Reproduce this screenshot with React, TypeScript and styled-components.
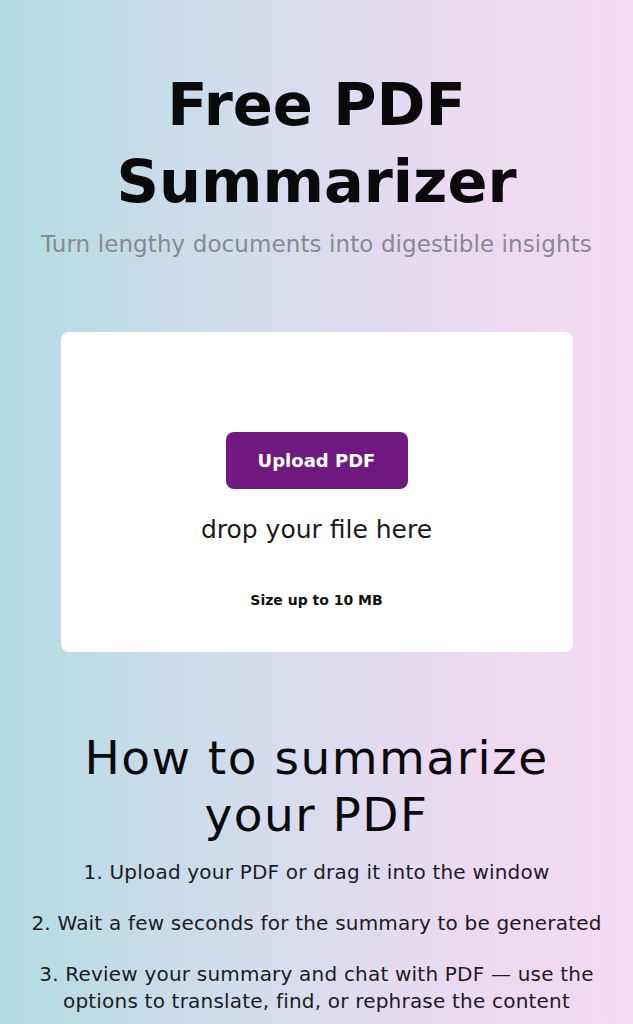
import React from "react";
import styled, { createGlobalStyle } from "styled-components";

const Global = createGlobalStyle`
  html, body { margin: 0; padding: 0; }
  body {
    font-family: "DejaVu Sans", "Noto Sans", sans-serif;
    background: linear-gradient(90deg, #b3dce3 0%, #d8dcef 45%, #ecdaf1 75%, #f6d9f3 100%);
    min-height: 1024px;
    color: #111;
  }
`;

const Page = styled.main`
  display: flex;
  flex-direction: column;
  align-items: center;
  padding: 66px 16px 0;
  box-sizing: border-box;
`;

const Title = styled.h1`
  margin: 0;
  font-size: 59px;
  line-height: 77px;
  font-weight: 700;
  text-align: center;
  color: #0a0a0a;
`;

const Subtitle = styled.p`
  margin: 10px 0 0;
  font-size: 23px;
  line-height: 28px;
  font-weight: 400;
  letter-spacing: 0.1px;
  color: #878a90;
  text-align: center;
`;

const Card = styled.section`
  margin-top: 74px;
  width: 512px;
  height: 320px;
  background: #fff;
  border-radius: 8px;
  display: flex;
  flex-direction: column;
  align-items: center;
  box-sizing: border-box;
  padding-top: 100px;
`;

const UploadButton = styled.button`
  width: 182px;
  height: 57px;
  border: none;
  border-radius: 8px;
  background: #701a80;
  color: #fff;
  font-family: inherit;
  font-size: 18px;
  font-weight: 700;
  cursor: pointer;
`;

const DropText = styled.p`
  margin: 26px 0 0;
  font-size: 25px;
  line-height: 30px;
  color: #1a1a1a;
`;

const SizeNote = styled.p`
  margin: 46px 0 0;
  font-size: 14px;
  line-height: 18px;
  font-weight: 600;
  color: #111;
`;

const HowTitle = styled.h2`
  margin: 77px 0 0;
  font-size: 47px;
  line-height: 57px;
  font-weight: 500;
  letter-spacing: 1.5px;
  text-align: center;
  color: #0a0a0a;
`;

const Steps = styled.ol`
  list-style: none;
  margin: 16px 0 0;
  padding: 0;
  display: flex;
  flex-direction: column;
  gap: 24px;
`;

const Step = styled.li`
  font-size: 20px;
  line-height: 27px;
  font-weight: 400;
  letter-spacing: 0.2px;
  text-align: center;
  color: #1c1c1c;
`;

export default function App() {
  return (
    <>
      <Global />
      <Page>
        <Title>
          Free PDF
          <br />
          Summarizer
        </Title>
        <Subtitle>Turn lengthy documents into digestible insights</Subtitle>
        <Card>
          <UploadButton>Upload PDF</UploadButton>
          <DropText>drop your file here</DropText>
          <SizeNote>Size up to 10 MB</SizeNote>
        </Card>
        <HowTitle>
          How to summarize
          <br />
          your PDF
        </HowTitle>
        <Steps>
          <Step>1. Upload your PDF or drag it into the window</Step>
          <Step>2. Wait a few seconds for the summary to be generated</Step>
          <Step>
            3. Review your summary and chat with PDF — use the
            <br />
            options to translate, find, or rephrase the content
          </Step>
        </Steps>
      </Page>
    </>
  );
}
